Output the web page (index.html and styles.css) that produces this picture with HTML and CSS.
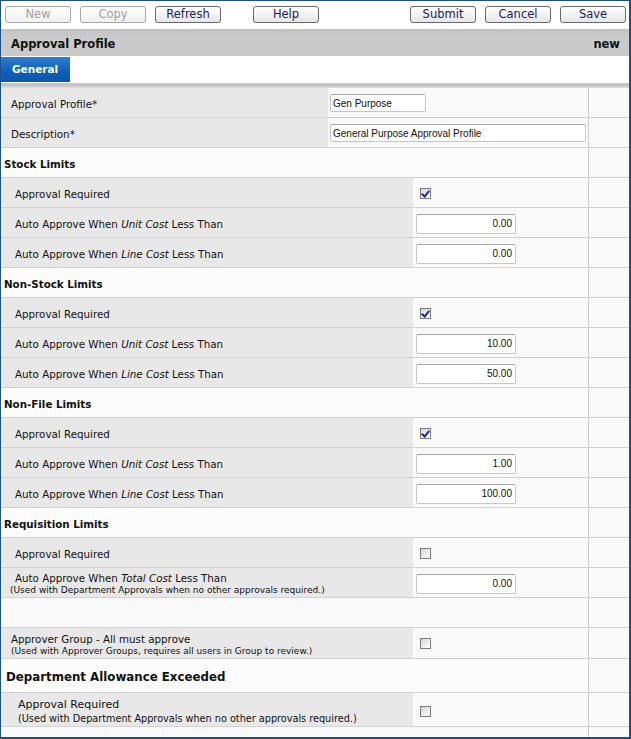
FILE: index.html
```html
<!DOCTYPE html>
<html>
<head>
<meta charset="utf-8">
<link rel="stylesheet" href="styles.css">
</head>
<body>
<div class="frame">
  <div class="toolbar">
    <button class="btn disabled">New</button>
    <button class="btn disabled">Copy</button>
    <button class="btn">Refresh</button>
    <button class="btn help">Help</button>
    <button class="btn submit">Submit</button>
    <button class="btn">Cancel</button>
    <button class="btn">Save</button>
  </div>
  <div class="titlebar"><span>Approval Profile</span><span>new</span></div>
  <div class="tabbar"><div class="tab">General</div></div>
  <div class="sep"></div>

  <div class="row top"><div class="lab"><span>Approval Profile*</span></div><div class="val"><input class="txt short" value="Gen Purpose"></div><div class="end"></div></div>
  <div class="row top"><div class="lab"><span>Description*</span></div><div class="val"><input class="txt long" value="General Purpose Approval Profile"></div><div class="end"></div></div>

  <div class="row head"><div class="hlab">Stock Limits</div><div class="end"></div></div>
  <div class="row"><div class="lab in"><span>Approval Required</span></div><div class="val"><span class="cb on"></span></div><div class="end"></div></div>
  <div class="row"><div class="lab in"><span>Auto Approve When <i>Unit Cost</i> Less Than</span></div><div class="val"><input class="num" value="0.00"></div><div class="end"></div></div>
  <div class="row"><div class="lab in"><span>Auto Approve When <i>Line Cost</i> Less Than</span></div><div class="val"><input class="num" value="0.00"></div><div class="end"></div></div>

  <div class="row head"><div class="hlab">Non-Stock Limits</div><div class="end"></div></div>
  <div class="row"><div class="lab in"><span>Approval Required</span></div><div class="val"><span class="cb on"></span></div><div class="end"></div></div>
  <div class="row"><div class="lab in"><span>Auto Approve When <i>Unit Cost</i> Less Than</span></div><div class="val"><input class="num" value="10.00"></div><div class="end"></div></div>
  <div class="row"><div class="lab in"><span>Auto Approve When <i>Line Cost</i> Less Than</span></div><div class="val"><input class="num" value="50.00"></div><div class="end"></div></div>

  <div class="row head"><div class="hlab">Non-File Limits</div><div class="end"></div></div>
  <div class="row"><div class="lab in"><span>Approval Required</span></div><div class="val"><span class="cb on"></span></div><div class="end"></div></div>
  <div class="row"><div class="lab in"><span>Auto Approve When <i>Unit Cost</i> Less Than</span></div><div class="val"><input class="num" value="1.00"></div><div class="end"></div></div>
  <div class="row"><div class="lab in"><span>Auto Approve When <i>Line Cost</i> Less Than</span></div><div class="val"><input class="num" value="100.00"></div><div class="end"></div></div>

  <div class="row head"><div class="hlab">Requisition Limits</div><div class="end"></div></div>
  <div class="row"><div class="lab in"><span>Approval Required</span></div><div class="val"><span class="cb"></span></div><div class="end"></div></div>
  <div class="row"><div class="lab in two"><span>Auto Approve When <i>Total Cost</i> Less Than</span><span class="note">(Used with Department Approvals when no other approvals required.)</span></div><div class="val"><input class="num" value="0.00"></div><div class="end"></div></div>
  <div class="row blank"><div class="fill"></div><div class="end"></div></div>
  <div class="row grp"><div class="lab two g"><span>Approver Group - All must approve</span><span class="note">(Used with Approver Groups, requires all users in Group to review.)</span></div><div class="val"><span class="cb"></span></div><div class="end"></div></div>
  <div class="row dhead"><div class="hlab big">Department Allowance Exceeded</div><div class="end"></div></div>
  <div class="row dept"><div class="lab two d"><span>Approval Required</span><span class="note">(Used with Department Approvals when no other approvals required.)</span></div><div class="val"><span class="cb"></span></div><div class="end"></div></div>
  <div class="row tail"><div class="fill"></div><div class="end"></div></div>
</div>
</body>
</html>
```
FILE: styles.css
```css
html, body { margin: 0; padding: 0; background: #fff; }
body { font-family: "DejaVu Sans", Verdana, sans-serif; color: #111; }
.frame {
  width: 631px; height: 739px; box-sizing: border-box;
  border: 1px solid #1d4f8c; border-right-width: 2px; border-bottom-width: 2px;
  background: #f8f8f8; overflow: hidden;
}
.toolbar {
  height: 28px; background: #fff; display: flex; align-items: flex-start;
  padding: 5px 0 0 4px; box-sizing: border-box; gap: 9px;
}
.btn {
  width: 66px; height: 17px; padding: 0; margin: 0;
  border: 1px solid #6a6a6a; border-radius: 3px;
  background: linear-gradient(#ffffff, #e6e6e6);
  font-family: "DejaVu Sans", Verdana, sans-serif; font-size: 11.5px; color: #1a1a66;
  line-height: 15px;
}
.btn.disabled { border-color: #a8a8a8; color: #a0a0a0; background: linear-gradient(#fff, #f0f0f0); }
.btn.help { margin-left: 23px; }
.btn.submit { margin-left: 82px; }
.titlebar {
  height: 27px; background: linear-gradient(#c2c2c2, #cbcbcb 30%, #c9c9c9);
  display: flex; justify-content: space-between; align-items: center;
  padding: 2px 9px 0 10px; box-sizing: border-box; font-weight: bold; font-size: 11.5px; color: #111;
}
.tabbar { height: 27px; background: #fff; padding-top: 1px; box-sizing: border-box; }
.tab {
  width: 69px; height: 25px; box-sizing: border-box; padding-left: 11px;
  background: linear-gradient(#2b7fd0, #0d5fb6 60%, #0a58ab);
  color: #fff; font-weight: bold; font-size: 10.5px; line-height: 25px;
}
.sep { height: 5px; background: linear-gradient(#c8c8c8, #c2c2c2 50%, #e2e2e2); }

.row { display: flex; height: 30px; box-sizing: border-box; border-bottom: 1px solid #d2d2d2; font-size: 10.3px; }
.lab { width: 412px; background: #e8e8e8; display: flex; align-items: center; padding: 2px 0 0 14px; box-sizing: border-box; white-space: nowrap; }
.row.top .lab { width: 327px; padding-left: 10px; }
.val { width: 176px; background: #f9f9f9; border-right: 1px solid #cdcdcd; display: flex; align-items: center; padding: 2px 0 0 3px; box-sizing: border-box; }
.row.top .val { width: 261px; padding-left: 2px; padding-top: 1px; }
.end { flex: 1; background: #f9f9f9; }
.row.head, .row.dhead { background: #fbfbfb; }
.hlab { width: 588px; border-right: 1px solid #cdcdcd; box-sizing: border-box; background: #fcfcfc; font-weight: bold; padding: 2px 0 0 3px; display: flex; align-items: center; }
.hlab.big { font-size: 11.8px; padding-left: 5px; }
.fill { width: 588px; border-right: 1px solid #cdcdcd; box-sizing: border-box; background: #f9f9f9; }
.lab.two { flex-direction: column; align-items: flex-start; justify-content: center; }
.lab.two .note { font-size: 9px; margin-left: -5px; margin-top: 1px; }
.lab.g { padding-left: 10px; }
.lab.g .note { margin-left: 0; margin-top: 1px; }
.lab.d { padding-left: 17px; font-size: 11px; }
.lab.d .note { margin-left: 0; font-size: 9.7px; margin-top: 2px; }
.row.grp { height: 31px; }
.row.dhead { height: 34px; }
.row.dept { height: 34px; }
.row.tail { height: 10px; border-bottom: none; }
.row.grp .val { align-items: flex-start; padding-top: 10px; }
.row.dept .val { align-items: flex-start; padding-top: 13px; }

input {
  font-family: "Liberation Sans", Arial, sans-serif; font-size: 10px; color: #111;
  border: 1px solid #c6c6c6; border-top-color: #a9a9a9; border-radius: 2px;
  background: #fff; box-sizing: border-box; margin: 0; outline: none;
}
.txt { height: 18px; padding: 0 2px; }
.txt.short { width: 96px; }
.txt.long { width: 256px; }
.num { width: 100px; height: 20px; text-align: right; padding: 0 3px; }
.cb {
  display: inline-block; width: 11px; height: 11px; box-sizing: border-box; margin-left: 4px;
  border: 1px solid #7d7d7d; background: linear-gradient(135deg, #d2d2d2, #f4f4f4 70%, #fff);
  position: relative; margin-top: 0;
}
.cb.on::after {
  content: ""; position: absolute; left: 2px; top: 0px; width: 3px; height: 6px;
  border: solid #1c2a9c; border-width: 0 2px 2px 0; transform: rotate(40deg);
}
```
